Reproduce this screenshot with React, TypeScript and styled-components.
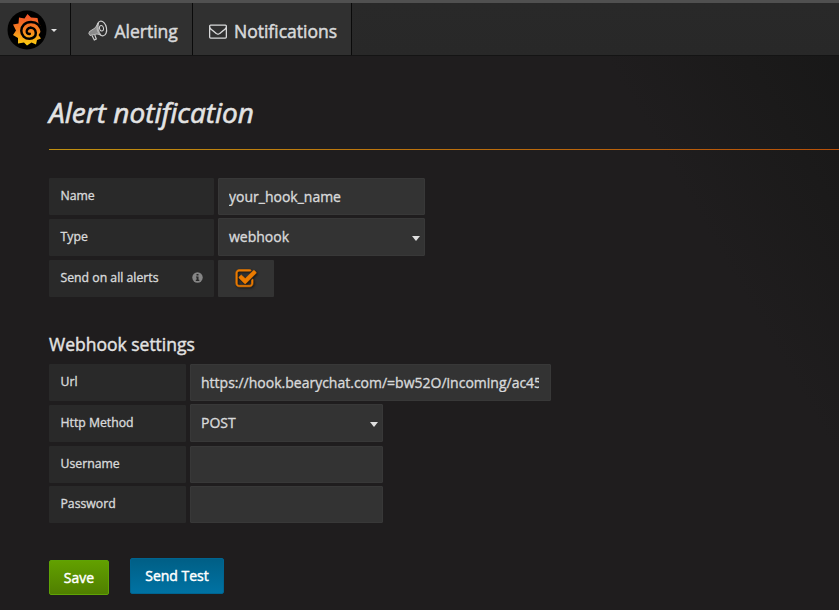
import React from "react";
import styled, { createGlobalStyle } from "styled-components";

const Global = createGlobalStyle`
  * { box-sizing: border-box; }
  html, body { margin: 0; height: 100%; overflow: hidden; background: #1f1d1e; }
  body, input, button { font-family: "Open Sans", sans-serif; color: #d8d9da; }
`;

const Page = styled.div`
  width: 100%;
  height: 100vh;
  overflow: hidden;
  background: linear-gradient(240deg, #171717 0, #1b1a1a 110px, #1f1d1e 230px);
`;

const Navbar = styled.nav`
  display: flex;
  height: 56px;
  background: linear-gradient(#292929, #282828);
  border-top: 3px solid #505050;
  border-bottom: 1px solid #141414;
`;

const Brand = styled.div`
  display: flex;
  align-items: center;
  width: 71px;
  padding: 1px 0 0 7px;
  gap: 4px;
  background: #303030;
  border-right: 1px solid #0a0a0a;
`;

const NavItem = styled.a<{ $width: number; $left: number; $gap: number }>`
  display: flex;
  align-items: center;
  width: ${(p) => p.$width}px;
  padding: 4px 0 0 ${(p) => p.$left}px;
  gap: ${(p) => p.$gap}px;
  background: #303030;
  border-right: 1px solid #0a0a0a;
  font-size: 17.5px;
  line-height: 24px;
  -webkit-text-stroke: 0.5px #d8d9da;
  white-space: nowrap;
`;

const Caret = styled.span`
  margin-top: 1px;
  border: 3px solid transparent;
  border-top-color: #e0e0e0;
  border-bottom: 0;
`;

const Main = styled.main`
  padding: 36px 0 0 49px;
`;

const Title = styled.h1`
  margin: 0;
  height: 58px;
  border-bottom: 1px solid;
  border-image: linear-gradient(90deg, #c09010, #b85008) 1;
  font-size: 28px;
  line-height: 40px;
  font-style: italic;
  font-weight: 400;
  -webkit-text-stroke: 0.6px #e3e3e3;
  color: #e3e3e3;
`;

const Section = styled.section<{ $top: number }>`
  padding-top: ${(p) => p.$top}px;
`;

const Heading = styled.h2`
  margin: 0 0 8px;
  font-size: 17.5px;
  line-height: 24px;
  font-weight: 400;
  -webkit-text-stroke: 0.4px #e3e3e3;
  color: #e3e3e3;
`;

const Row = styled.div<{ $height: number }>`
  display: flex;
  align-items: flex-end;
  gap: 4px;
  height: ${(p) => p.$height}px;
`;

const Label = styled.label<{ $width: number }>`
  display: flex;
  align-items: center;
  justify-content: space-between;
  width: ${(p) => p.$width}px;
  height: 37px;
  padding: 0 11px 3px 11.5px;
  background: #292929;
  border-radius: 1px;
  font-size: 12.25px;
  -webkit-text-stroke: 0.35px #d8d9da;
`;

const Input = styled.input<{ $width: number }>`
  width: ${(p) => p.$width}px;
  height: 37px;
  padding: 0 11px 0 10px;
  border: 1px solid #383838;
  border-radius: 1px;
  outline: none;
  background: #333333;
  font-size: 14px;
  -webkit-text-stroke: 0.35px #d8d9da;
`;

const Select = styled.div<{ $width: number }>`
  display: flex;
  align-items: center;
  justify-content: space-between;
  width: ${(p) => p.$width}px;
  height: 38px;
  padding: 0 4px 1px 10px;
  border: 1px solid #383838;
  border-radius: 1px;
  background: #333333;
  font-size: 14px;
  -webkit-text-stroke: 0.35px #d8d9da;
`;

const SelectArrow = styled.span`
  margin-top: 3px;
  border: 4px solid transparent;
  border-top: 5px solid #e0e0e0;
  border-bottom: 0;
`;

const CheckCell = styled.div`
  display: flex;
  align-items: center;
  justify-content: center;
  width: 56px;
  height: 37px;
  background: #333333;
  border-radius: 1px;
  svg { filter: drop-shadow(1px 1px 1px #111); }
`;

const Actions = styled.div`
  display: flex;
  gap: 21px;
  padding-top: 35px;
`;

const Button = styled.button<{ $tone: "green" | "blue" }>`
  width: ${(p) => (p.$tone === "green" ? 60 : 94)}px;
  height: ${(p) => (p.$tone === "green" ? 35 : 36)}px;
  margin-top: ${(p) => (p.$tone === "green" ? 2 : 0)}px;
  padding: 0 0 ${(p) => (p.$tone === "green" ? 0 : 2)}px;
  border: 1px solid ${(p) => (p.$tone === "green" ? "#5fa305" : "#006490")};
  border-radius: 2px;
  background: ${(p) => (p.$tone === "green" ? "linear-gradient(#62a000, #507f00)" : "linear-gradient(#005f86, #0072a3)")};
  color: #fff;
  font-size: 14px;
  font-weight: 400;
  -webkit-text-stroke: 0.45px #fff;
`;

const Logo = () => (
  <svg width="40" height="40" viewBox="0 0 40 40">
    <defs>
      <linearGradient id="flame" x1="0" y1="0" x2="0" y2="1">
        <stop offset="0" stopColor="#f0502a" />
        <stop offset="0.5" stopColor="#f58020" />
        <stop offset="1" stopColor="#fbd010" />
      </linearGradient>
    </defs>
    <circle cx="20" cy="20" r="19.5" fill="#000" />
    <path fill="url(#flame)" d="M20.500 4 24 7.500 30.500 8 31.500 13C33.500 15 34.500 17.500 34.500 20.500L31.500 25 34 28.500 30 30 29 34.500 24.500 32.500 20 35.500 17 32.500 11 33.500 11 28 6 25 9 20.500 6 14.500 11.500 13.500 12 7.500 17.500 8.500Z" />
    <path fill="none" stroke="#000" strokeWidth="2.500" strokeLinecap="round" d="M35 22.500C33.500 15 29 12 24 12 18 12 14.300 16 14.300 20.800 14.300 25.500 18 28.800 22.500 28.800 26.500 28.800 29 26 28.800 22.800 28.500 19.500 26.200 17.600 23.500 17.800" />
    <path fill="none" stroke="#000" strokeWidth="2.500" strokeLinecap="round" d="M23.500 17.800C20.800 18 19.500 20 19.800 22 20.100 23.600 21.500 24.300 22.800 23.900" />
  </svg>
);

const Megaphone = () => (
  <svg width="20" height="22" viewBox="0 0 20 22" fill="none" stroke="#cfcfcf" strokeWidth="1.200">
    <ellipse cx="13.800" cy="8.500" rx="4.700" ry="7.400" transform="rotate(-12 13.800 8.500)" />
    <ellipse cx="13.500" cy="8.300" rx="2" ry="2.800" transform="rotate(-12 13.500 8.300)" strokeWidth="1" />
    <path fill="#aaa" fillOpacity=".75" strokeWidth=".8" d="M10.500 3 7 8 1.500 11.500 .800 13.500 2 15.500 9 14 13 15C10.500 12 9.500 8 10.500 3Z" />
    <path d="M4 15.500 6.300 20 8.300 19 6.800 15" />
  </svg>
);

const Envelope = () => (
  <svg width="18" height="18" viewBox="0 0 1792 1792" fill="#d8d9da">
    <path d="M1664 1504v-768q-32 36-69 66-268 206-426 338-51 43-83 67t-86.5 48.5-102.5 24.5h-2q-48 0-102.5-24.5t-86.5-48.5-83-67q-158-132-426-338-37-30-69-66v768q0 13 9.5 22.5t22.5 9.5h1472q13 0 22.5-9.5t9.5-22.5zm0-1051v-24.5l-.5-13-3-12.5-5.5-9-9-7.5-14-2.5h-1472q-13 0-22.5 9.5t-9.5 22.5q0 168 147 284 193 152 401 317 6 5 35 29.5t46 37.5 44.5 31.5 50.5 27.5 43 9h2q20 0 43-9t50.5-27.5 44.5-31.5 46-37.5 35-29.5q208-165 401-317 54-43 100.5-115.5t46.5-131.5zm128-37v1088q0 66-47 113t-113 47h-1472q-66 0-113-47t-47-113v-1088q0-66 47-113t113-47h1472q66 0 113 47t47 113z" />
  </svg>
);

const Check = () => (
  <svg width="22" height="22" viewBox="0 0 1792 1792" fill="#eb7b00" stroke="#eb7b00" strokeWidth="45">
    <path d="M1472 930v318q0 119-84.5 203.5t-203.5 84.5h-832q-119 0-203.5-84.5t-84.5-203.5v-832q0-119 84.5-203.5t203.5-84.5h832q63 0 117 25 15 7 18 23 3 17-9 29l-49 49q-10 10-23 10-3 0-9-2-23-6-45-6h-832q-66 0-113 47t-47 113v832q0 66 47 113t113 47h832q66 0 113-47t47-113v-254q0-13 9-22l64-64q10-10 23-10 6 0 12 3 20 8 20 29zm231-489l-814 814q-24 24-57 24t-57-24l-430-430q-24-24-24-57t24-57l110-110q24-24 57-24t57 24l263 263 647-647q24-24 57-24t57 24l110 110q24 24 24 57t-24 57z" />
  </svg>
);

const Info = () => (
  <svg width="11" height="11" viewBox="0 0 11 11">
    <circle cx="5.500" cy="5.500" r="5.200" fill="#858585" />
    <path fill="#292929" d="M4.500 2h2v1.500h-2zM4 4.500h2.500v3.300H7.300V9H3.800V7.800h.8V5.600H4z" />
  </svg>
);

export default function App() {
  return (
    <Page>
      <Global />
      <Navbar>
        <Brand><Logo /><Caret /></Brand>
        <NavItem $width={122} $left={17} $gap={6.5}><Megaphone />Alerting</NavItem>
        <NavItem $width={159} $left={16} $gap={7}><Envelope />Notifications</NavItem>
      </Navbar>
      <Main>
        <Title>Alert notification</Title>
        <Section $top={28}>
          <Row $height={37}><Label $width={165}>Name</Label><Input $width={207} defaultValue="your_hook_name" /></Row>
          <Row $height={41}><Label $width={165}>Type</Label><Select $width={207}>webhook<SelectArrow /></Select></Row>
          <Row $height={41}><Label $width={165}>Send on all alerts<Info /></Label><CheckCell><Check /></CheckCell></Row>
        </Section>
        <Section $top={35}>
          <Heading>Webhook settings</Heading>
          <Row $height={37}><Label $width={137}>Url</Label><Input $width={361} defaultValue="https://hook.bearychat.com/=bw52O/incoming/ac45" /></Row>
          <Row $height={41}><Label $width={137}>Http Method</Label><Select $width={193}>POST<SelectArrow /></Select></Row>
          <Row $height={41}><Label $width={137}>Username</Label><Input $width={193} /></Row>
          <Row $height={40}><Label $width={137}>Password</Label><Input $width={193} /></Row>
        </Section>
        <Actions>
          <Button $tone="green">Save</Button>
          <Button $tone="blue">Send Test</Button>
        </Actions>
      </Main>
    </Page>
  );
}
